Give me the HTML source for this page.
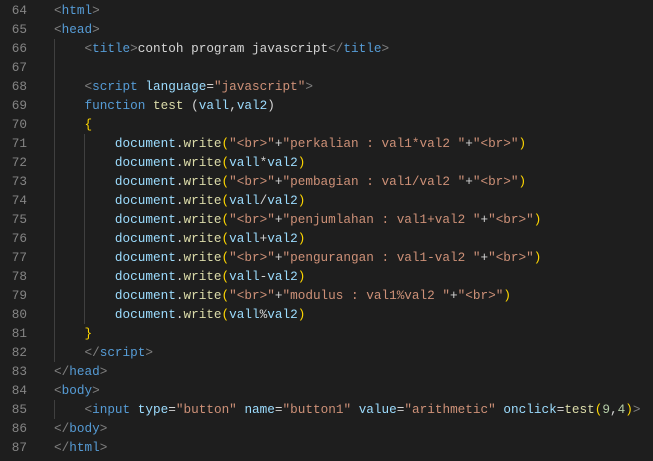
<!DOCTYPE html>
<html><head><style>
body{margin:0;background:#1e1e1e;width:653px;height:461px;overflow:hidden;}
.ed{position:absolute;top:1px;left:0;width:653px;font-family:"Liberation Mono",monospace;font-size:12.7px;line-height:19px;}
.l{height:19px;position:relative;}
.n{position:absolute;left:0;width:27px;text-align:right;color:#858585;}
.c{position:absolute;left:54px;color:#d4d4d4;white-space:pre;}
.g{position:absolute;width:1px;background:#404040;}
.t{color:#569cd6}.b{color:#808080}.a{color:#9cdcfe}.s{color:#ce9178}.f{color:#dcdcaa}.k{color:#569cd6}.p{color:#ffd700}.m{color:#b5cea8}.d{color:#d4d4d4}
</style></head><body>
<div class="g" style="left:54px;top:39px;height:323px"></div>
<div class="g" style="left:84px;top:134px;height:190px"></div>
<div class="g" style="left:54px;top:400px;height:19px"></div>
<div class="ed">
<div class="l"><span class="n">64</span><span class="c"><span class="b">&lt;</span><span class="t">html</span><span class="b">&gt;</span></span></div>
<div class="l"><span class="n">65</span><span class="c"><span class="b">&lt;</span><span class="t">head</span><span class="b">&gt;</span></span></div>
<div class="l"><span class="n">66</span><span class="c">    <span class="b">&lt;</span><span class="t">title</span><span class="b">&gt;</span>contoh program javascript<span class="b">&lt;/</span><span class="t">title</span><span class="b">&gt;</span></span></div>
<div class="l"><span class="n">67</span><span class="c"></span></div>
<div class="l"><span class="n">68</span><span class="c">    <span class="b">&lt;</span><span class="t">script</span> <span class="a">language</span>=<span class="s">"javascript"</span><span class="b">&gt;</span></span></div>
<div class="l"><span class="n">69</span><span class="c">    <span class="k">function</span> <span class="f">test</span> (<span class="a">vall</span>,<span class="a">val2</span>)</span></div>
<div class="l"><span class="n">70</span><span class="c">    <span class="p">{</span></span></div>
<div class="l"><span class="n">71</span><span class="c">        <span class="a">document</span>.<span class="f">write</span><span class="p">(</span><span class="s">"&lt;br&gt;"</span>+<span class="s">"perkalian : val1*val2 "</span>+<span class="s">"&lt;br&gt;"</span><span class="p">)</span></span></div>
<div class="l"><span class="n">72</span><span class="c">        <span class="a">document</span>.<span class="f">write</span><span class="p">(</span><span class="a">vall</span>*<span class="a">val2</span><span class="p">)</span></span></div>
<div class="l"><span class="n">73</span><span class="c">        <span class="a">document</span>.<span class="f">write</span><span class="p">(</span><span class="s">"&lt;br&gt;"</span>+<span class="s">"pembagian : val1/val2 "</span>+<span class="s">"&lt;br&gt;"</span><span class="p">)</span></span></div>
<div class="l"><span class="n">74</span><span class="c">        <span class="a">document</span>.<span class="f">write</span><span class="p">(</span><span class="a">vall</span>/<span class="a">val2</span><span class="p">)</span></span></div>
<div class="l"><span class="n">75</span><span class="c">        <span class="a">document</span>.<span class="f">write</span><span class="p">(</span><span class="s">"&lt;br&gt;"</span>+<span class="s">"penjumlahan : val1+val2 "</span>+<span class="s">"&lt;br&gt;"</span><span class="p">)</span></span></div>
<div class="l"><span class="n">76</span><span class="c">        <span class="a">document</span>.<span class="f">write</span><span class="p">(</span><span class="a">vall</span>+<span class="a">val2</span><span class="p">)</span></span></div>
<div class="l"><span class="n">77</span><span class="c">        <span class="a">document</span>.<span class="f">write</span><span class="p">(</span><span class="s">"&lt;br&gt;"</span>+<span class="s">"pengurangan : val1-val2 "</span>+<span class="s">"&lt;br&gt;"</span><span class="p">)</span></span></div>
<div class="l"><span class="n">78</span><span class="c">        <span class="a">document</span>.<span class="f">write</span><span class="p">(</span><span class="a">vall</span>-<span class="a">val2</span><span class="p">)</span></span></div>
<div class="l"><span class="n">79</span><span class="c">        <span class="a">document</span>.<span class="f">write</span><span class="p">(</span><span class="s">"&lt;br&gt;"</span>+<span class="s">"modulus : val1%val2 "</span>+<span class="s">"&lt;br&gt;"</span><span class="p">)</span></span></div>
<div class="l"><span class="n">80</span><span class="c">        <span class="a">document</span>.<span class="f">write</span><span class="p">(</span><span class="a">vall</span>%<span class="a">val2</span><span class="p">)</span></span></div>
<div class="l"><span class="n">81</span><span class="c">    <span class="p">}</span></span></div>
<div class="l"><span class="n">82</span><span class="c">    <span class="b">&lt;/</span><span class="t">script</span><span class="b">&gt;</span></span></div>
<div class="l"><span class="n">83</span><span class="c"><span class="b">&lt;/</span><span class="t">head</span><span class="b">&gt;</span></span></div>
<div class="l"><span class="n">84</span><span class="c"><span class="b">&lt;</span><span class="t">body</span><span class="b">&gt;</span></span></div>
<div class="l"><span class="n">85</span><span class="c">    <span class="b">&lt;</span><span class="t">input</span> <span class="a">type</span>=<span class="s">"button"</span> <span class="a">name</span>=<span class="s">"button1"</span> <span class="a">value</span>=<span class="s">"arithmetic"</span> <span class="a">onclick</span>=<span class="f">test</span><span class="p">(</span><span class="m">9</span>,<span class="m">4</span><span class="p">)</span><span class="b">&gt;</span></span></div>
<div class="l"><span class="n">86</span><span class="c"><span class="b">&lt;/</span><span class="t">body</span><span class="b">&gt;</span></span></div>
<div class="l"><span class="n">87</span><span class="c"><span class="b">&lt;/</span><span class="t">html</span><span class="b">&gt;</span></span></div>
</div>
</body></html>
